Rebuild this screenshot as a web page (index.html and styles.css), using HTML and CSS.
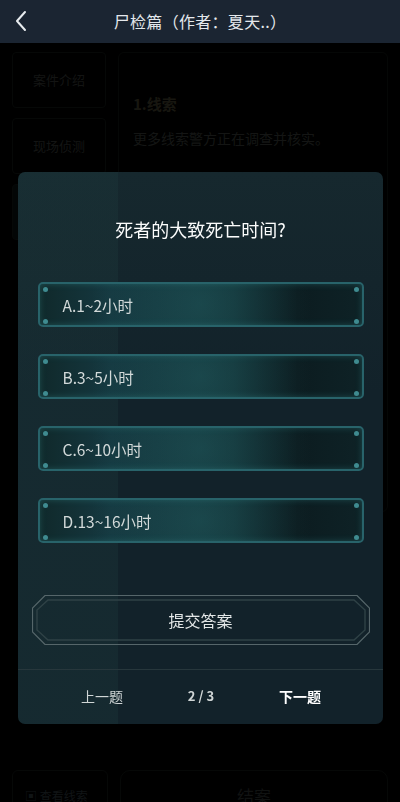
FILE: index.html
```html
<!DOCTYPE html>
<html lang="zh-CN">

<head>
    <meta charset="UTF-8">
    <meta name="viewport" content="width=device-width, initial-scale=1.0">
    <title>尸检篇</title>
    <link rel="stylesheet" href="styles.css">
</head>

<body>
    <!-- 顶部标题 -->
    <div class="title">
        <span class="back">
            <svg width="14" height="22" viewBox="0 0 14 22">
                <path d="M11 2 L3 11 L11 20" fill="none" stroke="#e8ecef" stroke-width="2" stroke-linecap="round" stroke-linejoin="round" />
            </svg>
        </span>
        尸检篇（作者：夏天..）
    </div>

    <!-- 案件页面(被遮挡) -->
    <div class="page">
        <ul class="tabs">
            <li>案件介绍</li>
            <li>现场侦测</li>
            <li class="active">线索</li>
        </ul>
        <div class="panel">
            <div class="panel-title">1.线索</div>
            <div class="panel-text">更多线索警方正在调查并核实。</div>
        </div>
    </div>

    <div class="bottom">
        <div class="btn-small">▣ 查看线索</div>
        <div class="btn-big">结案</div>
    </div>

    <!-- 遮罩层 -->
    <div class="mask"></div>

    <!-- 答题弹窗 -->
    <div class="dialog">
        <div class="question">死者的大致死亡时间?</div>
        <ul class="options">
            <li>A.1~2小时</li>
            <li>B.3~5小时</li>
            <li>C.6~10小时</li>
            <li>D.13~16小时</li>
        </ul>
        <div class="submit">
            <svg class="frame" width="338" height="50" viewBox="0 0 338 50">
                <path d="M13 0.5 H325 L337.5 13 V37 L325 49.5 H13 L0.5 37 V13 Z" fill="none" stroke="#56666a" stroke-width="1.2" />
                <path d="M16 5 H322 L333 15 V35 L322 45 H16 L5 35 V15 Z" fill="none" stroke="#2f4246" stroke-width="1.4" />
            </svg>
            <span>提交答案</span>
        </div>
        <div class="pager">
            <span class="prev">上一题</span>
            <span class="num">2 / 3</span>
            <span class="next">下一题</span>
        </div>
    </div>
</body>

</html>
```

FILE: styles.css
```css
* {
    box-sizing: border-box;
}

body,
ul,
li {
    margin: 0;
    padding: 0;
}

li {
    list-style: none;
}

body {
    width: 400px;
    height: 802px;
    overflow: hidden;
    background-color: #000;
    font-family: "Noto Sans CJK SC", "Noto Sans", sans-serif;
    color: #fff;
}

.title {
    position: relative;
    height: 43px;
    line-height: 42px;
    text-align: center;
    font-size: 16px;
    letter-spacing: 0.3px;
    color: #e4e8ec;
    background-color: #1b2532;
}

.back {
    position: absolute;
    left: 14px;
    top: 10px;
    height: 22px;
    line-height: 0;
}

/* 被遮挡的页面 */
.page {
    display: flex;
    gap: 12px;
    padding: 9px 12px 0 12px;
    height: 500px;
}

.tabs {
    width: 94px;
    display: flex;
    flex-direction: column;
    gap: 10px;
}

.tabs li {
    height: 56px;
    line-height: 54px;
    text-align: center;
    font-size: 13px;
    color: #565c58;
    border: 1px solid #1c2420;
    border-radius: 4px;
}

.tabs li.active {
    color: #6a7878;
    background-color: #0f1c1c;
}

.panel {
    flex: 1;
    height: 460px;
    border: 1px solid #1a201c;
    border-radius: 6px;
    padding: 40px 14px 0 14px;
}

.panel-title {
    font-size: 15px;
    font-weight: bold;
    color: #6a6648;
}

.panel-text {
    margin-top: 14px;
    font-size: 14px;
    color: #5a605c;
}

.bottom {
    display: flex;
    gap: 12px;
    padding: 227px 12px 0 12px;
}

.btn-small {
    width: 96px;
    height: 44px;
    border: 1px solid #1c2420;
    border-radius: 6px;
    padding: 18px 0 0 12px;
    font-size: 12px;
    line-height: 14px;
    color: #4a5a60;
}

.btn-big {
    flex: 1;
    height: 44px;
    border: 1px solid #1c2420;
    border-radius: 10px;
    text-align: center;
    padding-top: 15px;
    font-size: 17px;
    line-height: 20px;
    color: #4a5250;
}

.mask {
    position: fixed;
    left: 0;
    top: 43px;
    width: 100%;
    height: 100%;
    background-color: rgba(0, 0, 0, 0.78);
}

/* 弹窗 */
.dialog {
    position: absolute;
    left: 18px;
    top: 172px;
    width: 365px;
    height: 552px;
    border-radius: 7px;
    background:
        linear-gradient(90deg, rgba(30, 60, 62, 0.3) 0, rgba(30, 60, 62, 0.3) 100px, transparent 100px),
        linear-gradient(180deg, #16282e 0, #12222a 40%, #12222a 100%);
    display: flex;
    flex-direction: column;
    align-items: center;
}

.question {
    margin-top: 44px;
    font-size: 18px;
    color: #fbfcfc;
}

.options {
    width: 326px;
    margin-top: 40px;
    display: flex;
    flex-direction: column;
    gap: 27px;
}

.options li {
    position: relative;
    height: 45px;
    line-height: 43px;
    padding-left: 23px;
    font-size: 15.5px;
    color: #d2d9d9;
    border: 2px solid #28636a;
    border-radius: 5px;
    background:
        radial-gradient(circle at 50% 50%, rgba(40, 110, 112, 0.35) 0, rgba(40, 110, 112, 0.15) 60px, transparent 110px),
        linear-gradient(90deg, #10292b 0, #153840 22%, #123035 60%, #0c1c20 80%, #0e2226 100%);
    box-shadow: inset 0 0 6px rgba(60, 150, 150, 0.35);
}

.options li::before,
.options li::after {
    content: "";
    position: absolute;
    top: 3px;
    width: 5px;
    height: 5px;
    border-radius: 50%;
    background-color: #3f8b90;
    box-shadow: 0 32px 0 #3f8b90;
}

.options li::before {
    left: 3px;
}

.options li::after {
    right: 3px;
}

.submit {
    position: relative;
    width: 338px;
    height: 50px;
    margin-top: 52px;
}

.frame {
    position: absolute;
    left: 0;
    top: 0;
}

.submit span {
    position: relative;
    display: block;
    line-height: 50px;
    text-align: center;
    font-size: 16px;
    color: #e4e8e8;
}

.pager {
    width: 100%;
    margin-top: 24px;
    border-top: 1px solid #27373c;
    display: flex;
    justify-content: space-between;
    padding: 16px 62px 0 63px;
    font-size: 14px;
    color: #d0d6d6;
}

.num {
    font-size: 13px;
    font-weight: bold;
}

.next {
    color: #fff;
    font-weight: bold;
}
```
